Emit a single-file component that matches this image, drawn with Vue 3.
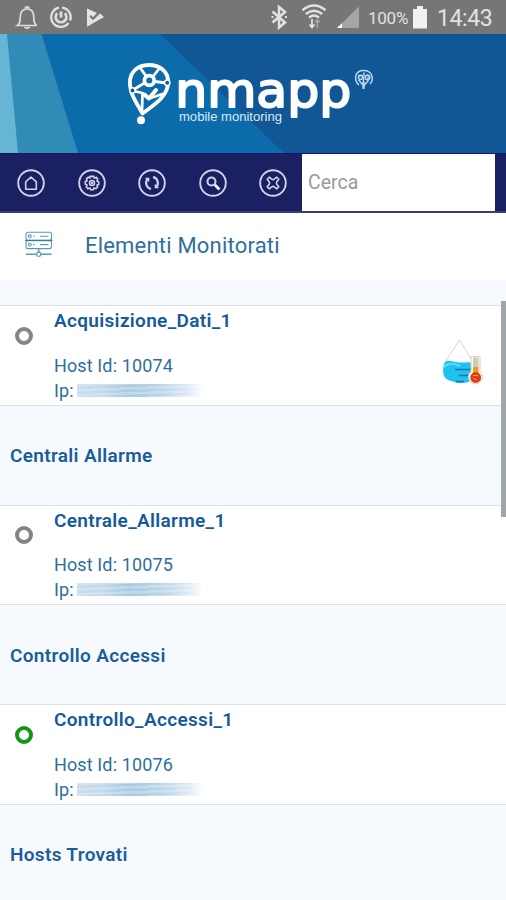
<script setup>
const groups = [
  { title: '', name: 'Acquisizione_Dati_1', id: 10074, state: 'idle', thermo: true },
  { title: 'Centrali Allarme', name: 'Centrale_Allarme_1', id: 10075, state: 'idle' },
  { title: 'Controllo Accessi', name: 'Controllo_Accessi_1', id: 10076, state: 'ok' },
]
const tools = ['home', 'gear', 'refresh', 'search', 'close']
</script>

<template>
  <div class="screen">
    <header class="status">
      <svg class="status-left" width="110" height="34" viewBox="0 0 110 34" fill="none" stroke="#dedede">
        <path d="M17.5 25.5C20 24 20.2 21.5 20.2 17.5C20.2 11.5 22.7 9 27 9S33.8 11.5 33.8 17.5C33.8 21.5 34 24 36.8 25.5Z" stroke-width="1.7" />
        <path d="M25 8.5a2.2 2.2 0 0 1 4.2 0M24.5 27a3 2 0 0 0 5.4 0" stroke-width="1.7" />
        <path d="M62 7.6A9.6 9.6 0 0 1 70 20.5M68.5 23A9.6 9.6 0 1 1 59 7.8" stroke-width="2.4" />
        <path d="M57.2 13.2a5.3 5.3 0 1 0 7.6 0M61 11.5v6" stroke-width="2.8" />
        <path d="M87 8.4 97 13 92.8 17.2 90.7 15 89.4 16.5 93 20.2 100 13.5 104 17 87 26.8Z" fill="#e4e4e4" stroke="none" />
      </svg>
      <div class="status-right">
        <svg width="98" height="34" viewBox="267 0 98 34" fill="none" stroke="#e2e2e2">
          <path d="M272.5 11.5 285 22.5 279 27.5V7L285 12 272.5 22.5" stroke-width="2.5" />
          <path d="M271.5 17h2M285 17h2" stroke-width="2.2" />
          <path d="M302.5 10.2Q314 .8 325.5 10.2M305.8 14Q314 7.5 322.2 14M309 17.6Q314 13.5 319 17.6" stroke-width="2.4" />
          <path d="M312 19v8M309.5 24.5l2.5 3 2.5-3" stroke-width="1.8" />
          <path d="M317.3 28V20.5M315 22.5l2.3-2.7 2.3 2.7" stroke="#a9a9a9" stroke-width="1.5" />
          <path d="M337 28 359 6.5V28Z" fill="#a5a5a5" stroke="none" />
          <path d="M337 28 342 23.3V28Z" fill="#fff" stroke="none" />
        </svg>
        <span class="percent">100%</span>
        <svg class="battery" width="14" height="23" viewBox="0 0 14 23"><path d="M0 3h4V0h6v3h4v19.5H0Z" fill="#f1f1f1" /></svg>
        <span class="clock">14:43</span>
      </div>
    </header>

    <div class="banner">
      <svg width="506" height="119" viewBox="0 34 506 119">
        <rect y="34" width="506" height="119" fill="#0c6bab" />
        <path d="M160 34H506V153H284Z" fill="#125795" />
        <path d="M0 34H41.5L78 153H0Z" fill="#308bb7" />
        <path d="M0 34H7L18 153H0Z" fill="#66b5d4" />
        <g fill="none" stroke="#fff" stroke-linecap="round" stroke-linejoin="round">
          <path d="M131 91C126 71 139 65 149 65C159 65 169 71 168 83C168 97 152 106 142.5 113.5C137.5 105 133 98 131 91Z" stroke-width="3.8" />
          <circle cx="149.3" cy="80.5" r="4.9" stroke-width="3.8" />
          <path d="M141 69 146 76M158.5 69.5 153 76.5M155 81.5 166 83M144.5 83 133 90" stroke-width="2.8" />
          <path d="M133.5 91 142.5 93 142 110M143.5 95 149 98.5 162.5 94" stroke-width="2.8" />
          <path d="M144.5 94.5 149 98.5 156 90" stroke-width="4" />
        </g>
        <circle cx="141" cy="120.3" r="4" fill="#fff" />
        <g fill="#125795" stroke="#fff" stroke-width="1.5"><circle cx="132.5" cy="90.5" r="2.7" /><circle cx="167.2" cy="82.8" r="2.7" /></g>
        <text class="wordmark" x="175.2" y="106.8" textLength="176" lengthAdjust="spacingAndGlyphs">nmapp</text>
        <text class="tagline" x="179" y="121" textLength="103" lengthAdjust="spacingAndGlyphs">mobile monitoring</text>
        <g fill="none" stroke="#b8d8ee" stroke-width="1.5">
          <path d="M359 85C354 81 354 71 363 70.5C373 70 374 80 370 84M363.5 89V77M363.5 86 368 81V77M363 85 358.5 80M358 75.5h5M364 72.5v4M367 74.5l3 2.5" />
          <circle cx="360.5" cy="77.5" r="2" /><circle cx="367.5" cy="77.5" r="2.3" />
          <path d="M363.5 82v7" stroke-width="2.2" />
        </g>
      </svg>
    </div>

    <nav class="toolbar">
      <div class="tools">
        <button v-for="t in tools" :key="t" class="tool" :aria-label="t">
          <svg width="28" height="28" viewBox="-14 -14 28 28" fill="none" stroke="#d2d2ea" stroke-width="1.6">
            <circle r="12.8" stroke-width="1.9" />
            <path v-if="t === 'home'" d="M-5.3 6.2V-1.2L0-6 5.3-1.2V6.2Z" stroke-linejoin="round" />
            <g v-else-if="t === 'gear'">
              <path d="M-1.8-6.6H1.8L2.3-5 4.5-5.5 5.7-3.8 5-2 6.7-1V1.4L5 2.2 5.5 4.3 3.8 5.7 2 5 1.2 6.7H-1.4L-2.2 5-4.3 5.5-5.7 3.8-5 2-6.7 1V-1.4L-5-2.2-5.5-4.3-3.8-5.7-2.2-5Z" />
              <circle r="2.5" /><circle r=".5" />
            </g>
            <g v-else-if="t === 'refresh'" stroke-width="2.2">
              <path d="M-1 5.9A5.9 5.9 0 0 1-4-4.2M1-5.9A5.9 5.9 0 0 1 4 4.2" />
              <path d="M-6.5-4.6H-3.4V-1.4M6.5 4.6H3.4V1.4" stroke-width="1.5" />
            </g>
            <g v-else-if="t === 'search'"><circle cx="-1.5" cy="-1.5" r="4" stroke-width="2" /><path d="M1.8 1.8 6.4 6.4" stroke="#f1f1fa" stroke-width="2.8" /></g>
            <path v-else d="M-3.8-5.8-1.2-3.8Q0-3 1.2-3.8L3.8-5.8 5.8-3.8 3.8-1.2Q3 0 3.8 1.2L5.8 3.8 3.8 5.8 1.2 3.8Q0 3-1.2 3.8L-3.8 5.8-5.8 3.8-3.8 1.2Q-3 0-3.8-1.2L-5.8-3.8Z" stroke-linejoin="round" />
          </svg>
        </button>
      </div>
      <input class="search" type="text" placeholder="Cerca" />
    </nav>

    <div class="heading">
      <svg width="28" height="27" viewBox="0 0 28 27" fill="none" stroke="#5b9ab9" stroke-width="1.1">
        <rect x="1" y="1.2" width="25.5" height="8" rx="2" /><rect x="1" y="9.8" width="25.5" height="7.8" rx="2" />
        <path d="M0 9.4H27.5" stroke="#367ca5" />
        <circle cx="4.8" cy="5.3" r="1.4" /><circle cx="4.8" cy="13.6" r="1.4" />
        <path d="M8 5.3h1.5M8 13.6h1.5M15 5.3h8.5M15 13.6h8.5" />
        <path d="M13.7 17.8v3.2M1 23.2h10.5M16 23.2h10.5" stroke-width="1.5" /><circle cx="13.7" cy="23.2" r="2.1" />
      </svg>
      <h1>Elementi Monitorati</h1>
    </div>

    <main>
      <section v-for="g in groups" :key="g.id">
        <h2 :class="{ blank: !g.title }">{{ g.title }}</h2>
        <article class="card">
          <span class="ring" :class="g.state"></span>
          <div class="info">
            <h3>{{ g.name }}</h3>
            <p>Host Id: {{ g.id }}</p>
            <p class="ip">Ip: <span class="masked"></span></p>
          </div>
          <svg v-if="g.thermo" class="thermo" width="42" height="52" viewBox="0 0 42 52">
            <path d="M3 24 17.5 2 29 21" fill="none" stroke="#dfdcd6" stroke-width="1.1" />
            <path d="M2 26C4 20 10 24 17 24.5C22 25 28 23 31 26L32 41C26 46 16 46 9 43C1 41 0 35 2 26Z" fill="#20c0f0" />
            <path d="M2 29C7 24 13 26 18 28" fill="none" stroke="#5cddfa" stroke-width="2" />
            <path d="M13 31.5H29M17 37.5H27M14 43.5H22" stroke="#1276a8" stroke-width="1.6" fill="none" />
            <path d="M29 18.5H38V33.5A7 7 0 1 1 29 33.5Z" fill="#fffaf0" stroke="#d8cbbb" stroke-width=".9" />
            <rect x="31" y="19.5" width="5.5" height="10" fill="#d0cbb9" />
            <rect x="31" y="29" width="5.5" height="6" fill="#f39a20" />
            <circle cx="33.7" cy="39.5" r="5.4" fill="#de3d18" />
            <path d="M31 37.5h5M31.5 40l3 2" stroke="#f9a081" stroke-width="1" />
          </svg>
        </article>
      </section>
      <h2>Hosts Trovati</h2>
    </main>
    <div class="scrollbar"></div>
  </div>
</template>

<style>
body { margin: 0; overflow: hidden; }
</style>

<style scoped>
* { box-sizing: border-box; }
.screen { position: relative; width: 506px; height: 900px; overflow: hidden; background: #f6faff; color: #2e6f9d; font-family: Roboto, "Liberation Sans", sans-serif; }
.status { display: flex; justify-content: space-between; height: 34px; background: #767676; color: #e2e2e2; }
.status-right { display: flex; align-items: center; width: 239px; }
.percent { width: 43px; padding: 2px 0 0 3px; font-size: 17px; letter-spacing: -.25px; }
.battery { margin-left: 5px; }
.clock { margin-left: 10px; padding-top: 2px; font-size: 23px; letter-spacing: -.4px; white-space: nowrap; }
.banner, .banner svg { display: block; height: 119px; }
.wordmark { font: 48px "DejaVu Sans", sans-serif; fill: #fff; stroke: #fff; stroke-width: 2px; stroke-linejoin: round; }
.tagline { font: 13.5px "Liberation Sans", sans-serif; fill: #d9eaf6; }
.toolbar { display: flex; justify-content: space-between; height: 60px; padding-right: 11px; background: #1b2062; border-top: 1px solid #12156b; border-bottom: 2px solid #3c3d78; }
.tools { display: flex; align-items: center; gap: 32.5px; padding: 0 0 0 17px; }
.tool { display: flex; width: 28px; height: 28px; padding: 0; border: 0; background: none; }
.search { width: 193px; height: 57px; padding: 0 6px; border: 0; border-radius: 0; background: #fff; font: 19.5px Roboto, sans-serif; outline: 0; }
.search::placeholder { color: #9a9a9a; opacity: 1; }
.heading { display: flex; gap: 32px; height: 67px; padding: 18px 0 0 25px; background: #fff; }
h1, h2, h3, p { margin: 0; }
h1 { font-size: 22px; font-weight: 400; line-height: 30px; letter-spacing: .2px; color: #2e6f9d; }
h2 { height: 99px; padding: 37.4px 10px 0; font-size: 19px; line-height: 25px; font-weight: 600; letter-spacing: .33px; color: #1a5d99; }
h2.blank { height: 25px; padding: 0; }
.card { display: flex; height: 100.6px; padding-left: 15px; border: solid #dedfe2; border-width: 1px 0; background: #fff; }
.ring { width: 18px; height: 18px; margin: 20.6px 21px 0 0; border: 4px solid #858585; border-radius: 50%; }
.ring.ok { border-color: #149514; }
.info { flex: 1; }
h3 { height: 46.5px; padding-top: 2px; font-size: 19px; line-height: 25px; font-weight: 600; letter-spacing: .33px; color: #145a9c; }
p { font-size: 18px; line-height: 25px; letter-spacing: .12px; }
.ip { display: flex; align-items: center; }
.masked { width: 126px; height: 13px; margin-left: 3px; background: repeating-linear-gradient(178deg, #ffffff40 0 2px, transparent 3px 5px), linear-gradient(90deg, #c9ddec, #bfd8ea 22%, #a9cae1 40%, #b8d4e7 65%, #dce9f3 88%, #fff); }
.thermo { margin: 32px 22px 0 0; }
.scrollbar { position: absolute; top: 301px; right: 0; width: 5px; height: 216px; background: #a0a7aa; }
</style>
